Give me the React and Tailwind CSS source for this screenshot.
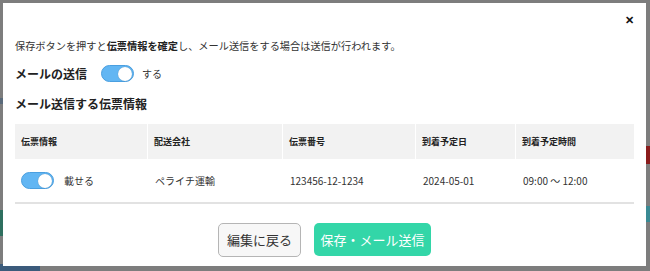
import React from "react";

const jp = { fontFamily: '"Noto Sans CJK JP", "Noto Sans", sans-serif' };

function Toggle() {
  return (
    <span className="relative inline-flex h-[17px] w-[33px] shrink-0 items-center rounded-full border border-[#4a9fe0] bg-[#62b6f3]">
      <span className="absolute right-[1px] h-[14px] w-[14px] rounded-full bg-white shadow-[0_0_1px_rgba(0,0,0,0.3)]" />
    </span>
  );
}

const cols = ["伝票情報", "配送会社", "伝票番号", "到着予定日", "到着予定時間"];
const widths = ["w-[133px]", "w-[135px]", "w-[133px]", "w-[100px]", "flex-1"];

export default function App() {
  return (
    <div className="relative h-[271px] w-[650px] overflow-hidden bg-[#7d7d7d]" style={jp}>
      {/* backdrop slivers */}
      <div className="absolute left-0 top-[98px] h-[6px] w-[3px] bg-[#5a6a7a]" />
      <div className="absolute left-0 top-[210px] h-[26px] w-[3px] bg-[#2f6f5f]" />
      <div className="absolute left-0 top-[264px] h-[7px] w-[40px] bg-[#3b5b7b]" />
      <div className="absolute right-0 top-[146px] h-[18px] w-[4px] bg-[#8a1c1c]" />
      <div className="absolute right-0 top-[206px] h-[16px] w-[4px] bg-[#3a8a94]" />

      <div className="absolute left-[3px] top-[3px] flex h-[263px] w-[643px] flex-col bg-white px-[12px] text-[#222]">
        <div className="flex h-[32px] items-center justify-end pr-[0px]">
          <span className="text-[11px] font-bold leading-none text-[#111]">✕</span>
        </div>
        <p className="mt-[4px] text-[10.2px] leading-[14px] text-[#333]">
          保存ボタンを押すと<span className="font-bold text-[#222]">伝票情報を確定</span>し、メール送信をする場合は送信が行われます。
        </p>
        <div className="mt-[12px] flex items-center">
          <span className="w-[86px] text-[12px] font-bold leading-[16px]">メールの送信</span>
          <Toggle />
          <span className="ml-[8px] text-[10px] text-[#333]">する</span>
        </div>
        <h3 className="mt-[14px] text-[12px] font-bold leading-[16px]">メール送信する伝票情報</h3>

        <div className="mt-[12px] w-[619px] border-b-2 border-[#e2e2e2]">
          <div className="flex h-[35px] bg-[#f2f2f2]">
            {cols.map((c, i) => (
              <div
                key={c}
                className={`${widths[i]} flex items-center px-[6px] text-[9px] font-bold ${i < 4 ? "border-r border-white" : ""}`}
              >
                {c}
              </div>
            ))}
          </div>
          <div className="flex h-[43px] text-[10px] text-[#333]">
            <div className="flex w-[133px] items-center gap-[10px] px-[6px]">
              <Toggle />
              <span>載せる</span>
            </div>
            <div className="flex w-[135px] items-center px-[7px]">ペライチ運輸</div>
            <div className="flex w-[133px] items-center px-[7px]">123456-12-1234</div>
            <div className="flex w-[100px] items-center px-[7px]">2024-05-01</div>
            <div className="flex flex-1 items-center px-[7px]">09:00 〜 12:00</div>
          </div>
        </div>

        <div className="mt-[19px] flex justify-center gap-[13px]">
          <button className="h-[34px] w-[83px] rounded-[5px] border border-[#b5b5b5] bg-[#f7f7f7] text-[13px] text-[#333]">
            編集に戻る
          </button>
          <button className="h-[33px] w-[117px] rounded-[5px] bg-[#33d6a8] text-[13px] text-white">
            保存・メール送信
          </button>
        </div>
      </div>
    </div>
  );
}
